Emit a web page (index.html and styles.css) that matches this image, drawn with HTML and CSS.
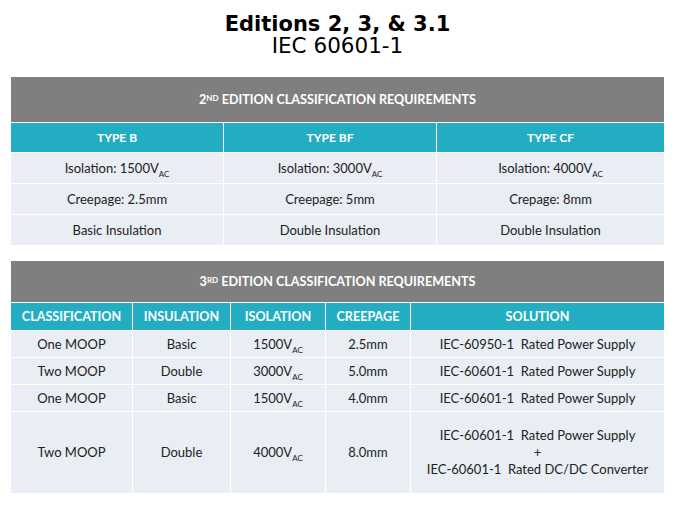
FILE: index.html
```html
<!DOCTYPE html>
<html>
<head>
<meta charset="utf-8">
<link rel="stylesheet" href="styles.css">
</head>
<body>
<div class="page">
  <header class="title">
    <div class="t1">Editions 2, 3, &amp; 3.1</div>
    <div class="t2">IEC 60601-1</div>
  </header>

  <table class="grid g1">
    <colgroup><col style="width:213px"><col style="width:213px"><col></colgroup>
    <tr class="cap"><th colspan="3">2<sup>ND</sup> EDITION CLASSIFICATION REQUIREMENTS</th></tr>
    <tr class="head"><th>TYPE B</th><th>TYPE BF</th><th>TYPE CF</th></tr>
    <tr><td>Isolation: 1500V<sub>AC</sub></td><td>Isolation: 3000V<sub>AC</sub></td><td>Isolation: 4000V<sub>AC</sub></td></tr>
    <tr><td>Creepage: 2.5mm</td><td>Creepage: 5mm</td><td>Crepage: 8mm</td></tr>
    <tr><td>Basic Insulation</td><td>Double Insulation</td><td>Double Insulation</td></tr>
  </table>

  <table class="grid g2">
    <colgroup><col style="width:122px"><col style="width:98px"><col style="width:95px"><col style="width:85px"><col></colgroup>
    <tr class="cap"><th colspan="5">3<sup>RD</sup> EDITION CLASSIFICATION REQUIREMENTS</th></tr>
    <tr class="head"><th>CLASSIFICATION</th><th>INSULATION</th><th>ISOLATION</th><th>CREEPAGE</th><th>SOLUTION</th></tr>
    <tr><td>One MOOP</td><td>Basic</td><td>1500V<sub>AC</sub></td><td>2.5mm</td><td>IEC-60950-1&nbsp; Rated Power Supply</td></tr>
    <tr><td>Two MOOP</td><td>Double</td><td>3000V<sub>AC</sub></td><td>5.0mm</td><td>IEC-60601-1&nbsp; Rated Power Supply</td></tr>
    <tr><td>One MOOP</td><td>Basic</td><td>1500V<sub>AC</sub></td><td>4.0mm</td><td>IEC-60601-1&nbsp; Rated Power Supply</td></tr>
    <tr class="tall"><td>Two MOOP</td><td>Double</td><td>4000V<sub>AC</sub></td><td>8.0mm</td><td>IEC-60601-1&nbsp; Rated Power Supply<br>+<br>IEC-60601-1&nbsp; Rated DC/DC Converter</td></tr>
  </table>
</div>
</body>
</html>
```

FILE: styles.css
```css
html, body {
  margin: 0;
  padding: 0;
  background: #ffffff;
}

.page {
  width: 675px;
  padding: 0 10px;
  box-sizing: border-box;
}

.title {
  text-align: center;
  font-family: "DejaVu Sans", Verdana, sans-serif;
  color: #000;
  padding-top: 13px;
  height: 65px;
  box-sizing: border-box;
}

.title .t1 {
  font-size: 21px;
  font-weight: bold;
  line-height: 22px;
}

.title .t2 {
  font-size: 21.5px;
  line-height: 21px;
}

.grid {
  width: 655px;
  border-collapse: collapse;
  table-layout: fixed;
  font-family: Lato, "Open Sans", sans-serif;
  color: #222;
}

.grid th, .grid td {
  border: 1px solid #ffffff;
  text-align: center;
  padding: 0;
}

.grid .cap th {
  background: #7f7f7f;
  color: #ffffff;
  font-size: 12.6px;
  font-weight: bold;
  border-top: none;
}

.grid .head th {
  background: #23adc3;
  color: #ffffff;
  font-size: 12px;
  font-weight: bold;
}

.grid td {
  background: #e9edf4;
  font-size: 13px;
}

.grid sup {
  font-size: 8px;
  vertical-align: 3px;
  line-height: 0;
}

.grid sub {
  font-size: 8px;
  vertical-align: -4px;
  line-height: 0;
}

.g1 {
  margin-top: 12px;
}

.g1 .cap th { height: 45px; }
.g1 .head th { height: 29px; }
.g1 td { height: 30px; }

.g2 {
  margin-top: 15px;
}

.g2 .cap th { height: 41px; }
.g2 .head th { height: 27px; font-size: 12.6px; }
.g2 td { height: 26px; }
.g2 .tall td { height: 81px; line-height: 17px; }
```
